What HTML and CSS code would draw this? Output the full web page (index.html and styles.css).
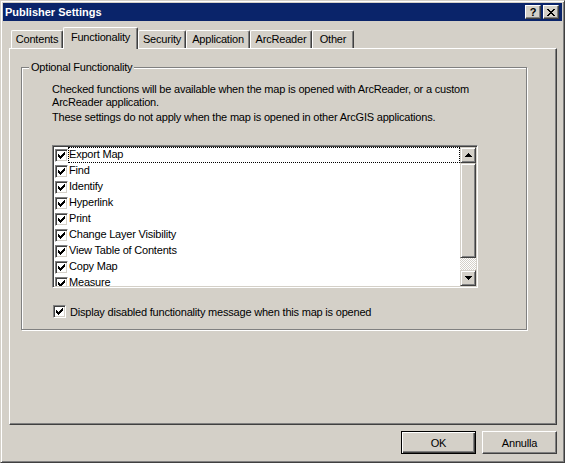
FILE: index.html
```html
<!DOCTYPE html>
<html>
<head>
<meta charset="utf-8">
<link rel="stylesheet" href="styles.css">
</head>
<body>
<div class="window">
  <div class="titlebar">
    <span class="title">Publisher Settings</span>
    <div class="tbuttons">
      <span class="tbtn help">?</span>
      <span class="tbtn close"><svg width="8" height="7" viewBox="0 0 8 7"><path d="M0 0h2v1h-2zM6 0h2v1h-2zM1 1h2v1h-2zM5 1h2v1h-2zM2 2h4v1h-4zM3 3h2v1h-2zM2 4h4v1h-4zM1 5h2v1h-2zM5 5h2v1h-2zM0 6h2v1h-2zM6 6h2v1h-2z" fill="#000"/></svg></span>
    </div>
  </div>
  <div class="tabs">
    <div class="tab w-contents">Contents</div>
    <div class="tab sel w-func">Functionality</div>
    <div class="tab w-sec">Security</div>
    <div class="tab w-app">Application</div>
    <div class="tab w-arc">ArcReader</div>
    <div class="tab w-other">Other</div>
  </div>
  <div class="panel">
    <fieldset class="group">
      <legend>Optional Functionality</legend>
      <p class="desc">Checked functions will be available when the map is opened with ArcReader, or a custom ArcReader application.</p>
      <p class="desc p2">These settings do not apply when the map is opened in other ArcGIS applications.</p>
      <div class="list">
        <div class="items">
          <div class="item"><span class="cb"><svg width="7" height="7" viewBox="0 0 7 7"><path d="M6 0h1v3h-1zM5 1h1v3h-1zM4 2h1v3h-1zM3 3h1v3h-1zM2 4h1v3h-1zM1 3h1v3h-1zM0 2h1v3h-1z"/></svg></span><span class="lbl focus">Export Map</span></div>
          <div class="item"><span class="cb"><svg width="7" height="7" viewBox="0 0 7 7"><path d="M6 0h1v3h-1zM5 1h1v3h-1zM4 2h1v3h-1zM3 3h1v3h-1zM2 4h1v3h-1zM1 3h1v3h-1zM0 2h1v3h-1z"/></svg></span><span class="lbl">Find</span></div>
          <div class="item"><span class="cb"><svg width="7" height="7" viewBox="0 0 7 7"><path d="M6 0h1v3h-1zM5 1h1v3h-1zM4 2h1v3h-1zM3 3h1v3h-1zM2 4h1v3h-1zM1 3h1v3h-1zM0 2h1v3h-1z"/></svg></span><span class="lbl">Identify</span></div>
          <div class="item"><span class="cb"><svg width="7" height="7" viewBox="0 0 7 7"><path d="M6 0h1v3h-1zM5 1h1v3h-1zM4 2h1v3h-1zM3 3h1v3h-1zM2 4h1v3h-1zM1 3h1v3h-1zM0 2h1v3h-1z"/></svg></span><span class="lbl">Hyperlink</span></div>
          <div class="item"><span class="cb"><svg width="7" height="7" viewBox="0 0 7 7"><path d="M6 0h1v3h-1zM5 1h1v3h-1zM4 2h1v3h-1zM3 3h1v3h-1zM2 4h1v3h-1zM1 3h1v3h-1zM0 2h1v3h-1z"/></svg></span><span class="lbl">Print</span></div>
          <div class="item"><span class="cb"><svg width="7" height="7" viewBox="0 0 7 7"><path d="M6 0h1v3h-1zM5 1h1v3h-1zM4 2h1v3h-1zM3 3h1v3h-1zM2 4h1v3h-1zM1 3h1v3h-1zM0 2h1v3h-1z"/></svg></span><span class="lbl">Change Layer Visibility</span></div>
          <div class="item"><span class="cb"><svg width="7" height="7" viewBox="0 0 7 7"><path d="M6 0h1v3h-1zM5 1h1v3h-1zM4 2h1v3h-1zM3 3h1v3h-1zM2 4h1v3h-1zM1 3h1v3h-1zM0 2h1v3h-1z"/></svg></span><span class="lbl">View Table of Contents</span></div>
          <div class="item"><span class="cb"><svg width="7" height="7" viewBox="0 0 7 7"><path d="M6 0h1v3h-1zM5 1h1v3h-1zM4 2h1v3h-1zM3 3h1v3h-1zM2 4h1v3h-1zM1 3h1v3h-1zM0 2h1v3h-1z"/></svg></span><span class="lbl">Copy Map</span></div>
          <div class="item"><span class="cb"><svg width="7" height="7" viewBox="0 0 7 7"><path d="M6 0h1v3h-1zM5 1h1v3h-1zM4 2h1v3h-1zM3 3h1v3h-1zM2 4h1v3h-1zM1 3h1v3h-1zM0 2h1v3h-1z"/></svg></span><span class="lbl">Measure</span></div>
        </div>
        <div class="scrollbar">
          <div class="sbtn"><svg width="7" height="4" viewBox="0 0 7 4"><path d="M3 0h1v1h1v1h1v1h1v1h-7v-1h1v-1h1v-1h1z"/></svg></div>
          <div class="thumb"></div>
          <div class="track"></div>
          <div class="sbtn"><svg width="7" height="4" viewBox="0 0 7 4"><path d="M0 0h7v1h-1v1h-1v1h-1v1h-1v-1h-1v-1h-1v-1h-1z"/></svg></div>
        </div>
      </div>
      <div class="option">
        <span class="cb"><svg width="7" height="7" viewBox="0 0 7 7"><path d="M6 0h1v3h-1zM5 1h1v3h-1zM4 2h1v3h-1zM3 3h1v3h-1zM2 4h1v3h-1zM1 3h1v3h-1zM0 2h1v3h-1z"/></svg></span>
        <span class="optlbl">Display disabled functionality message when this map is opened</span>
      </div>
    </fieldset>
  </div>
  <div class="buttons">
    <div class="btn default"><span>OK</span></div>
    <div class="btn">Annulla</div>
  </div>
</div>
</body>
</html>
```
FILE: styles.css
```css
* { box-sizing: border-box; }
html, body { margin: 0; padding: 0; }
body {
  width: 565px;
  height: 463px;
  overflow: hidden;
  background: #d4d0c8;
  font-family: "Liberation Sans", Arial, sans-serif;
  font-size: 11px;
  letter-spacing: -0.2px;
  color: #000;
}
.window {
  width: 565px;
  height: 463px;
  background: #d4d0c8;
  border: 1px solid;
  border-color: #d4d0c8 #404040 #404040 #d4d0c8;
  box-shadow: inset 1px 1px 0 #fff, inset -1px -1px 0 #808080;
  padding: 2px;
  display: flex;
  flex-direction: column;
}
.titlebar {
  height: 18px;
  background: #0a246a;
  display: flex;
  align-items: center;
  justify-content: space-between;
  padding: 0 3px 0 2px;
}
.title {
  color: #fff;
  font-weight: bold;
  font-size: 11px;
  letter-spacing: 0;
}
.tbuttons { display: flex; gap: 2px; }
.tbtn {
  width: 16px;
  height: 14px;
  background: #d4d0c8;
  border: 1px solid;
  border-color: #fff #404040 #404040 #fff;
  box-shadow: inset -1px -1px 0 #808080;
  display: flex;
  align-items: center;
  justify-content: center;
  font-weight: bold;
  font-size: 11px;
  line-height: 12px;
}
.tabs {
  display: flex;
  align-items: flex-end;
  height: 24px;
  padding-left: 8px;
  margin-top: 3px;
}
.tab {
  height: 18px;
  border-top: 1px solid #fff;
  border-left: 1px solid #fff;
  border-right: 1px solid #404040;
  box-shadow: inset -1px 0 0 #808080;
  border-radius: 2px 2px 0 0;
  display: flex;
  align-items: center;
  justify-content: center;
  padding-bottom: 1px;
}
.tab.sel {
  height: 22px;
  margin-bottom: -1px;
  z-index: 1;
  background: #d4d0c8;
  padding-bottom: 4px;
}
.w-contents { width: 52px; }
.w-func { width: 75px; }
.w-sec { width: 48px; }
.w-app { width: 64px; }
.w-arc { width: 62px; }
.w-other { width: 42px; }
.panel {
  height: 377px;
  margin: 0 5px 0 6px;
  border: 1px solid;
  border-color: #fff #404040 #404040 #fff;
  box-shadow: inset -1px -1px 0 #808080;
  padding: 12px 0 0 11px;
}
.group {
  width: 506px;
  height: 269px;
  margin: 0;
  padding: 9px 0 0 30px;
  border: 1px solid #808080;
  box-shadow: 1px 1px 0 #fff, inset 1px 1px 0 #fff;
}
.group legend {
  margin-left: -23px;
  padding: 0 2px;
  line-height: 13px;
  background: #d4d0c8;
}
.desc {
  margin: 0;
  line-height: 13px;
  width: 440px;
}
.p2 { margin-top: 2px; }
.list {
  margin-top: 21px;
  width: 426px;
  height: 143px;
  background: #fff;
  border: 1px solid;
  border-color: #808080 #fff #fff #808080;
  box-shadow: inset 1px 1px 0 #404040, inset -1px -1px 0 #d4d0c8;
  padding: 1px;
  display: flex;
}
.items {
  flex: 1;
  overflow: hidden;
}
.item {
  height: 16px;
  display: flex;
  align-items: center;
  padding-left: 1px;
}
.cb {
  width: 13px;
  height: 13px;
  flex: none;
  background: #fff;
  border: 1px solid;
  border-color: #808080 #fff #fff #808080;
  box-shadow: inset 1px 1px 0 #404040, inset -1px -1px 0 #d4d0c8;
  display: flex;
  align-items: center;
  justify-content: center;
}
.cb svg { display: block; }
.lbl {
  flex: 1;
  height: 16px;
  line-height: 13px;
  padding-bottom: 1px;
  border: 1px dotted transparent;
}
.lbl.focus { border-color: #000; }
.scrollbar {
  width: 16px;
  flex: none;
  display: flex;
  flex-direction: column;
}
.sbtn, .thumb {
  background: #d4d0c8;
  border: 1px solid;
  border-color: #d4d0c8 #404040 #404040 #d4d0c8;
  box-shadow: inset 1px 1px 0 #fff, inset -1px -1px 0 #808080;
}
.sbtn {
  height: 16px;
  display: flex;
  align-items: center;
  justify-content: center;
}
.sbtn svg { display: block; }
.thumb { height: 95px; }
.track {
  flex: 1;
  background: repeating-conic-gradient(#fff 0 25%, #d4d0c8 0 50%) 0 0 / 2px 2px;
}
.option {
  display: flex;
  align-items: center;
  margin-top: 17px;
  margin-left: 1px;
  height: 13px;
}
.optlbl { margin-left: 4px; }
.buttons {
  display: flex;
  justify-content: flex-end;
  gap: 6px;
  padding-right: 5px;
  margin-top: 6px;
}
.btn {
  width: 75px;
  height: 23px;
  border: 1px solid;
  border-color: #fff #404040 #404040 #fff;
  box-shadow: inset -1px -1px 0 #808080;
  display: flex;
  align-items: center;
  justify-content: center;
}
.btn.default {
  border: 1px solid #000;
  box-shadow: inset 1px 1px 0 #fff, inset -1px -1px 0 #404040, inset -2px -2px 0 #808080;
}
```
